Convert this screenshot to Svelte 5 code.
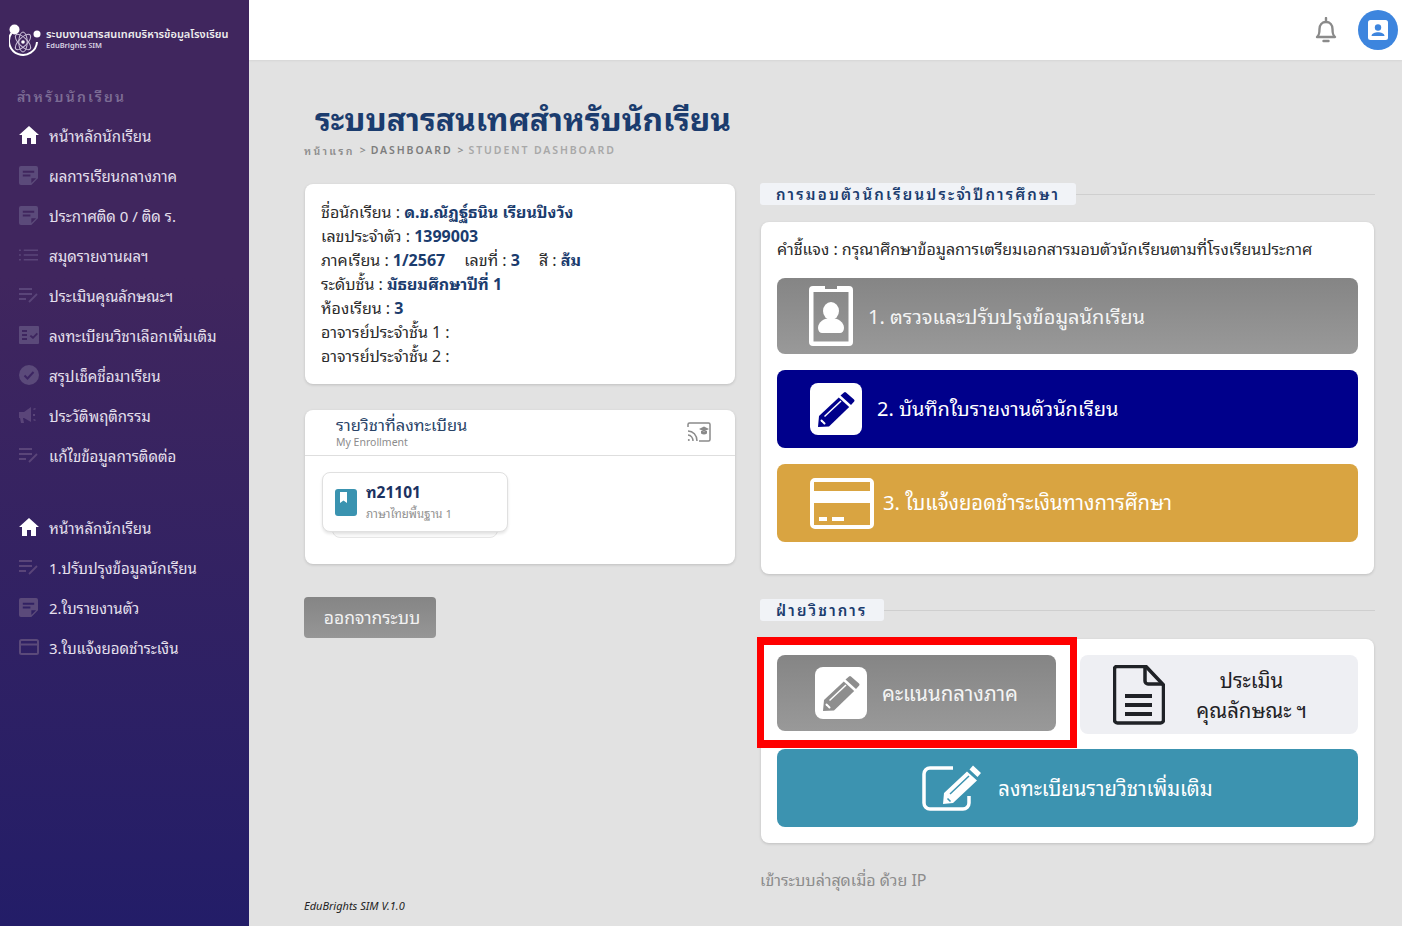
<script lang="ts">
  const studentMenu = [
    { label: 'หน้าหลักนักเรียน', icon: 'home' },
    { label: 'ผลการเรียนกลางภาค', icon: 'note' },
    { label: 'ประกาศติด 0 / ติด ร.', icon: 'note' },
    { label: 'สมุดรายงานผลฯ', icon: 'list' },
    { label: 'ประเมินคุณลักษณะฯ', icon: 'edit' },
    { label: 'ลงทะเบียนวิชาเลือกเพิ่มเติม', icon: 'check' },
    { label: 'สรุปเช็คชื่อมาเรียน', icon: 'circle' },
    { label: 'ประวัติพฤติกรรม', icon: 'horn' },
    { label: 'แก้ไขข้อมูลการติดต่อ', icon: 'edit' }
  ];
  const enrolMenu = [
    { label: 'หน้าหลักนักเรียน', icon: 'home' },
    { label: '1.ปรับปรุงข้อมูลนักเรียน', icon: 'edit' },
    { label: '2.ใบรายงานตัว', icon: 'note' },
    { label: '3.ใบแจ้งยอดชำระเงิน', icon: 'card' }
  ];
</script>

{#snippet pencil(color: string)}
  <svg viewBox="0 0 40 40" width="40" height="40" fill={color}>
    <path d="M28 3.500a1.500 1.500 0 0 1 2 0l8 7a1.500 1.500 0 0 1 .2 2L35 16 24.500 6.500z" />
    <path d="M22.800 8.500L33.200 18 13 37.500 2 38l1-11z" />
    <path d="M8.500 27.500L25 12" stroke="#fff" stroke-width="1.500" fill="none" />
    <path d="M5.500 31.500l3 3" stroke="#fff" stroke-width="2" stroke-linecap="round" fill="none" />
  </svg>
{/snippet}

{#snippet menuIcon(name: string)}
  {#if name === 'home'}
    <svg viewBox="0 0 20 18" width="20" height="18" fill="#fff"><path d="M10 0L0 9h3v9h5v-6h4v6h5V9h3z" /></svg>
  {:else if name === 'note'}
    <svg viewBox="0 0 20 20" width="19" height="19" fill="#5b4a7a"><path d="M2 0h16a2 2 0 0 1 2 2v11l-7 7H2a2 2 0 0 1-2-2V2a2 2 0 0 1 2-2zm2 5v2h12V5zm0 4v2h8V9zm9 4v5l5-5z" fill-rule="evenodd" /></svg>
  {:else if name === 'list'}
    <svg viewBox="0 0 20 14" width="19" height="14" stroke="#5a4579" stroke-width="1.600"><path d="M5 2h15M5 7h15M5 12h15M0 2h2M0 7h2M0 12h2" /></svg>
  {:else if name === 'edit'}
    <svg viewBox="0 0 20 16" width="20" height="16" stroke="#5a4579" stroke-width="1.800" fill="none"><path d="M0 2h13M0 7h13M0 12h7M10 15l8-8" /></svg>
  {:else if name === 'check'}
    <svg viewBox="0 0 20 18" width="20" height="18" fill="#5b4a7a"><path d="M1 0h18a1 1 0 0 1 1 1v16a1 1 0 0 1-1 1H1a1 1 0 0 1-1-1V1a1 1 0 0 1 1-1zm2 4v2h5V4zm0 4v2h5V8zm0 4v2h5v-2zm9-3l-1.300 1.300L14 13l5-5-1.300-1.300L14 10.400z" fill-rule="evenodd" /></svg>
  {:else if name === 'circle'}
    <svg viewBox="0 0 20 20" width="20" height="20"><circle cx="10" cy="10" r="10" fill="#5b4a7a" /><path d="M5.500 10.500l3 3 6-6.500" stroke="#3c2562" stroke-width="2" fill="none" /></svg>
  {:else if name === 'horn'}
    <svg viewBox="0 0 20 16" width="20" height="16" fill="#5a4579"><path d="M0 5h5l7-5v15L5 11H4l1 5H2l-1-5H0zM14 7h2v2h-2zM14 2l2-1 1 1-2 1zM14 13l1-1 2 1-1 1z" /></svg>
  {:else}
    <svg viewBox="0 0 20 16" width="20" height="16" fill="none" stroke="#5b4a7a" stroke-width="2"><rect x="1" y="1" width="18" height="14" rx="1.500" /><path d="M1 5.500h18" /></svg>
  {/if}
{/snippet}

<div class="layout">
  <aside class="sidebar">
    <div class="brand">
      <svg class="logo" viewBox="0 0 32 32" width="32" height="32">
        <path d="M2.500 9A14 14 0 1 0 28 18" fill="none" stroke="#fff" stroke-width="2" />
        <ellipse cx="14" cy="18" rx="10" ry="4.200" fill="none" stroke="#cdc2da" stroke-width="1" transform="rotate(45 14 18)" />
        <ellipse cx="14" cy="18" rx="10" ry="4.200" fill="none" stroke="#cdc2da" stroke-width="1" transform="rotate(-45 14 18)" />
        <ellipse cx="14" cy="18" rx="10" ry="4.200" fill="none" stroke="#cdc2da" stroke-width="1" transform="rotate(90 14 18)" />
        <circle cx="5.500" cy="5.500" r="5" fill="#fff" />
        <circle cx="28" cy="10" r="3.500" fill="#fff" />
        <circle cx="14" cy="18" r="1.800" fill="#fff" />
      </svg>
      <div>
        <div class="brand-th">ระบบงานสารสนเทศบริหารข้อมูลโรงเรียน</div>
        <div class="brand-en">EduBrights SIM</div>
      </div>
    </div>
    <div class="menu-title">สำหรับนักเรียน</div>
    <nav class="menu">
      {#each studentMenu as item}
        <div class="menu-item">
          <span class="menu-icon">{@render menuIcon(item.icon)}</span>
          <span>{item.label}</span>
        </div>
      {/each}
    </nav>
    <nav class="menu second">
      {#each enrolMenu as item}
        <div class="menu-item">
          <span class="menu-icon">{@render menuIcon(item.icon)}</span>
          <span>{item.label}</span>
        </div>
      {/each}
    </nav>
  </aside>

  <div class="page">
    <header class="topbar">
      <svg viewBox="0 0 24 26" width="24" height="26" fill="none" stroke="#8a8a8a" stroke-width="2.400">
        <path d="M3 20c2-2 2.500-3 2.500-8 0-4 2.500-7 6.500-7s6.500 3 6.500 7c0 5 .5 6 2.500 8z" stroke-linejoin="round" />
        <path d="M12 1v3M9.500 24h5" stroke-linecap="round" />
      </svg>
      <div class="avatar">
        <svg viewBox="0 0 20 20" width="20" height="20"><rect width="20" height="20" rx="2.500" fill="#fff" /><circle cx="10" cy="7.500" r="3.200" fill="#3d85de" /><path d="M3.500 16c0-2.600 3.500-3.800 6.500-3.800s6.500 1.200 6.500 3.800z" fill="#3d85de" /></svg>
      </div>
    </header>

    <main class="content">
      <div class="col-left">
        <h1>ระบบสารสนเทศสำหรับนักเรียน</h1>
        <div class="crumbs">
          <span class="first">หน้าแรก</span><i>&gt;</i><span class="mid">DASHBOARD</span><i>&gt;</i><span class="last">STUDENT DASHBOARD</span>
        </div>

        <section class="card info">
          <div>ชื่อนักเรียน : <b>ด.ช.ณัฏฐ์ธนิน เรียนปิงวัง</b></div>
          <div>เลขประจำตัว : <b>1399003</b></div>
          <div class="term">
            <span>ภาคเรียน : <b>1/2567</b></span>
            <span>เลขที่ : <b>3</b></span>
            <span>สี : <b>ส้ม</b></span>
          </div>
          <div>ระดับชั้น : <b>มัธยมศึกษาปีที่ 1</b></div>
          <div>ห้องเรียน : <b>3</b></div>
          <div>อาจารย์ประจำชั้น 1 :</div>
          <div>อาจารย์ประจำชั้น 2 :</div>
        </section>

        <section class="card enroll">
          <div class="enroll-head">
            <div>
              <div class="enroll-title">รายวิชาที่ลงทะเบียน</div>
              <div class="enroll-sub">My Enrollment</div>
            </div>
            <svg viewBox="0 0 24 20" width="24" height="20" fill="none" stroke="#8a8a8a" stroke-width="1.500">
              <path d="M1 5V2.500A1.500 1.500 0 0 1 2.500 1h19A1.500 1.500 0 0 1 23 2.500v15a1.500 1.500 0 0 1-1.500 1.500H12" />
              <path d="M1 9c5 0 9 4 9 10M1 13c3 0 5 3 5 6" />
              <circle cx="1.800" cy="18" r="1" fill="#8a8a8a" stroke="none" />
              <path d="M12 7l5-2.500L22 7l-5 2.500z M14 9v2.500c2 1.300 4 1.300 6 0V9" fill="#8a8a8a" stroke="none" />
            </svg>
          </div>
          <div class="enroll-body">
            <div class="course">
              <svg viewBox="0 0 22 27" width="22" height="27"><rect width="22" height="27" rx="3" fill="#3a93b0" /><path d="M5 3h7v11l-3.500-2.500L5 14z" fill="#fff" /></svg>
              <div>
                <div class="course-code">ท21101</div>
                <div class="course-name">ภาษาไทยพื้นฐาน 1</div>
              </div>
            </div>
          </div>
        </section>

        <button class="logout">ออกจากระบบ</button>
        <div class="version">EduBrights SIM V.1.0</div>
      </div>

      <div class="col-right">
        <div class="legend"><span>การมอบตัวนักเรียนประจำปีการศึกษา</span></div>
        <section class="card panel">
          <p class="note">คำชี้แจง : กรุณาศึกษาข้อมูลการเตรียมเอกสารมอบตัวนักเรียนตามที่โรงเรียนประกาศ</p>
          <div class="tile gray t1">
            <svg viewBox="0 0 44 60" width="44" height="60" fill="#fff">
              <path d="M4 0h12v3h12V0h12a4 4 0 0 1 4 4v52a4 4 0 0 1-4 4H4a4 4 0 0 1-4-4V4a4 4 0 0 1 4-4zm.5 6v49.500h35V6z" fill-rule="evenodd" />
              <ellipse cx="22" cy="25" rx="8" ry="9" />
              <path d="M9 42c0-6 6-10 13-10s13 4 13 10c0 3-2 5-4 5H13c-2 0-4-2-4-5z" />
            </svg>
            <span>1. ตรวจและปรับปรุงข้อมูลนักเรียน</span>
          </div>
          <div class="tile navy t2">
            <div class="icon-box">{@render pencil('#00008b')}</div>
            <span>2. บันทึกใบรายงานตัวนักเรียน</span>
          </div>
          <div class="tile gold t3">
            <svg viewBox="0 0 64 51" width="64" height="51" fill="#fff">
              <path d="M5 0h54a5 5 0 0 1 5 5v41a5 5 0 0 1-5 5H5a5 5 0 0 1-5-5V5a5 5 0 0 1 5-5zM4 4v9h56V4zM4 25v22h56V25z" fill-rule="evenodd" />
              <path d="M9 39h8v4H9zM22 39h12v4H22z" />
            </svg>
            <span>3. ใบแจ้งยอดชำระเงินทางการศึกษา</span>
          </div>
        </section>

        <div class="legend second-legend"><span>ฝ่ายวิชาการ</span></div>
        <section class="card panel acad">
          <div class="acad-row">
            <div class="tile gray a1">
              <div class="icon-box">{@render pencil('#8e8e8e')}</div>
              <span>คะแนนกลางภาค</span>
              <div class="marker"></div>
            </div>
            <div class="tile light a2">
              <svg viewBox="0 0 52 60" width="52" height="60">
                <path d="M3 1.500h30L50.500 20v35a3 3 0 0 1-3 3H4.500a3 3 0 0 1-3-3V3z" fill="none" stroke="#1f2226" stroke-width="3.500" stroke-linejoin="round" />
                <path d="M32 2v14a3 3 0 0 0 3 3h15" fill="none" stroke="#1f2226" stroke-width="3.500" />
                <path d="M12 29h27v4H12zM12 38h27v4H12zM12 47h27v4H12z" fill="#1f2226" />
              </svg>
              <span>ประเมิน<br />คุณลักษณะ ฯ</span>
            </div>
          </div>
          <div class="tile teal a3">
            <svg viewBox="0 0 60 46" width="60" height="46" fill="none">
              <path d="M47 31v7a6 6 0 0 1-6 6H8a6 6 0 0 1-6-6V9a6 6 0 0 1 6-6h23" stroke="#fff" stroke-width="3.500" />
              <path d="M51 .5l8 7.500-3.500 4-8-7.500zM45 6.500l10 9L31 38l-10 1 1-11z" fill="#fff" />
              <path d="M28 29l19-18M25.500 33.500l3 3" stroke="#3c93b0" stroke-width="1.500" />
            </svg>
            <span>ลงทะเบียนรายวิชาเพิ่มเติม</span>
          </div>
        </section>
        <div class="last-login">เข้าระบบล่าสุดเมื่อ ด้วย IP</div>
      </div>
    </main>
  </div>
</div>

<style>
  :global(body) {
    margin: 0;
    background: #e2e2e2;
    font-family: "Noto Sans", "Noto Sans Thai Looped", sans-serif;
  }
  .layout {
    display: flex;
    height: 926px;
    overflow: hidden;
  }
  .sidebar {
    width: 249px;
    flex-shrink: 0;
    background: linear-gradient(180deg, #40265e 0%, #40265e 30%, #231d68 100%);
    color: #e8e3f0;
  }
  .brand {
    display: flex;
    align-items: center;
    gap: 5px;
    padding: 24px 0 0 9px;
    height: 32px;
  }
  .brand-th {
    margin-top: -2px;
    font-family: "Noto Sans", "Noto Sans Thai", sans-serif;
    font-size: 11px;
    line-height: 13px;
    font-weight: 600;
    color: #eee;
    white-space: nowrap;
  }
  .brand-en {
    font-size: 7.500px;
    line-height: 11px;
    font-weight: 600;
    color: #d8d2e2;
  }
  .menu-title {
    margin: 31px 0 0 17px;
    font-size: 14px;
    line-height: 20px;
    letter-spacing: 2.200px;
    font-weight: 600;
    color: #7c6c94;
  }
  .menu {
    margin-top: 8px;
  }
  .menu.second {
    margin-top: 32px;
  }
  .menu-item {
    display: flex;
    align-items: center;
    height: 40px;
    padding-left: 19px;
    font-size: 15px;
    color: #e6e0ee;
    white-space: nowrap;
  }
  .menu-icon {
    width: 30px;
    display: flex;
    align-items: center;
  }
  .page {
    flex: 1;
    min-width: 0;
  }
  .topbar {
    height: 60px;
    background: #fff;
    display: flex;
    justify-content: flex-end;
    align-items: center;
    gap: 20px;
    padding-right: 4px;
    box-shadow: 0 1px 2px rgba(0, 0, 0, .06);
  }
  .avatar {
    width: 40px;
    height: 40px;
    border-radius: 50%;
    background: #3d85de;
    display: flex;
    align-items: center;
    justify-content: center;
  }
  .content {
    display: flex;
    gap: 25px;
    padding: 0 27px 0 55px;
  }
  .col-left {
    width: 431px;
    flex-shrink: 0;
  }
  .col-right {
    flex: 1;
    min-width: 0;
    padding-top: 123px;
  }
  h1 {
    margin: 37px 0 1px 11px;
    height: 44px;
    font-size: 31.700px;
    line-height: 44px;
    font-weight: 700;
    color: #1b3c6e;
    white-space: nowrap;
  }
  .crumbs {
    display: flex;
    align-items: center;
    gap: 5px;
    height: 16px;
    font-size: 10.500px;
    font-weight: 600;
    letter-spacing: 1.900px;
    color: #8c8c8c;
  }
  .crumbs .first {
    letter-spacing: 2.300px;
  }
  .crumbs i {
    font-style: normal;
    letter-spacing: 0;
  }
  .crumbs .mid {
    color: #7d7d7d;
  }
  .crumbs .last {
    color: #a8a8a8;
  }
  .card {
    background: #fff;
    border-radius: 8px;
    box-shadow: 0 1px 3px rgba(0, 0, 0, .16);
  }
  .info {
    margin: 26px 0 0 1px;
    height: 200px;
    width: 430px;
    padding: 16px 16px 8px;
    box-sizing: border-box;
    font-size: 16px;
    line-height: 24px;
    color: #2b2b2b;
    white-space: nowrap;
  }
  .info b {
    color: #1b3c6e;
    font-weight: 700;
  }
  .info > div {
    height: 24px;
  }
  .term {
    display: flex;
    gap: 19px;
  }
  .enroll {
    margin: 26px 0 0 1px;
    height: 154px;
    width: 430px;
  }
  .enroll-head {
    height: 43px;
    padding: 0 24px 2px 31px;
    display: flex;
    justify-content: space-between;
    align-items: center;
    border-bottom: 1px solid #dedede;
  }
  .enroll-title {
    font-size: 16.500px;
    line-height: 21px;
    color: #2a4468;
  }
  .enroll-sub {
    font-size: 10.500px;
    line-height: 15px;
    color: #8c8c8c;
  }
  .enroll-body {
    position: relative;
    z-index: 0;
    padding: 16px 17px;
  }
  .course {
    position: relative;
    width: 186px;
    height: 60px;
    box-sizing: border-box;
    padding: 0 12px;
    display: flex;
    align-items: center;
    gap: 9px;
    border: 1px solid #e0e0e0;
    border-radius: 8px;
    background: #fff;
    box-shadow: 0 2px 3px rgba(0, 0, 0, .1);
  }
  .course::after {
    content: "";
    position: absolute;
    left: 9px;
    right: 9px;
    bottom: -7px;
    height: 12px;
    z-index: -1;
    border: 1px solid #e6e6e6;
    border-radius: 0 0 8px 8px;
    background: #fafafa;
  }
  .course-code {
    font-size: 15.500px;
    line-height: 22px;
    font-weight: 700;
    color: #1b3160;
    margin-top: 2px;
  }
  .course-name {
    font-size: 11.500px;
    line-height: 22px;
    color: #909090;
  }
  .logout {
    display: block;
    margin-top: 33px;
    width: 132px;
    height: 41px;
    padding: 0 0 4px 4px;
    border: 0;
    border-radius: 4px;
    background: linear-gradient(180deg, #858585, #969696);
    color: #f2f2f2;
    font: inherit;
    font-size: 17.500px;
  }
  .version {
    margin-top: 260px;
    font-size: 11px;
    line-height: 16px;
    font-style: italic;
    color: #222;
  }
  .legend {
    height: 22px;
    display: flex;
    align-items: center;
  }
  .legend::after {
    content: "";
    flex: 1;
    height: 1px;
    background: #cfcfcf;
  }
  .legend span {
    background: #f1f3f7;
    border-radius: 3px;
    padding: 0 16px;
    height: 22px;
    line-height: 22px;
    font-size: 15px;
    font-weight: 600;
    letter-spacing: 2.200px;
    color: #1b3c6e;
    white-space: nowrap;
  }
  .second-legend {
    margin-top: 25px;
  }
  .second-legend + .panel {
    margin-top: 18px;
  }
  .panel {
    margin: 17px 1px 0;
    padding: 16px;
  }
  .note {
    margin: -1px 0 17px;
    height: 24px;
    font-size: 16px;
    line-height: 24px;
    color: #2b2b2b;
    white-space: nowrap;
  }
  .tile {
    display: flex;
    align-items: center;
    border-radius: 8px;
    color: #fff;
    font-size: 20px;
    white-space: nowrap;
    box-sizing: border-box;
  }
  .tile > span {
    padding-bottom: 4px;
  }
  .gray {
    background: linear-gradient(180deg, #858585, #999);
    color: #f4f4f4;
  }
  .navy {
    background: #00008b;
  }
  .gold {
    background: #d9a441;
  }
  .teal {
    background: #3c93b0;
  }
  .light {
    background: #eeeff3;
    color: #1f2226;
  }
  .t1 {
    height: 76px;
    padding-left: 32px;
    gap: 15px;
    margin-bottom: 16px;
  }
  .t1 > span,
  .a1 > span,
  .a3 > span {
    padding-bottom: 2px;
  }
  .t2 {
    height: 78px;
    padding-left: 33px;
    gap: 15px;
    margin-bottom: 16px;
  }
  .t3 {
    height: 78px;
    padding-left: 33px;
    gap: 9px;
    margin-bottom: 16px;
    font-size: 20.200px;
  }
  .icon-box {
    width: 52px;
    height: 52px;
    border-radius: 8px;
    background: #fff;
    display: flex;
    align-items: center;
    justify-content: center;
  }
  .acad-row {
    display: flex;
    gap: 24px;
    margin-bottom: 15px;
    align-items: flex-start;
    height: 79px;
  }
  .a1 {
    position: relative;
    width: 279px;
    height: 76px;
    padding-left: 38px;
    gap: 15px;
    font-size: 20.400px;
  }
  .marker {
    position: absolute;
    left: -20px;
    top: -18px;
    width: 320px;
    height: 111px;
    box-sizing: border-box;
    border: solid #f00;
    border-width: 8px 7px;
  }
  .a2 {
    flex: 1;
    height: 79px;
    padding-left: 33px;
    gap: 25px;
    font-size: 20.400px;
    line-height: 30px;
  }
  .a2 > span {
    flex: 1;
    text-align: center;
    padding: 0 45px 0 0;
  }
  .a3 {
    height: 78px;
    justify-content: center;
    gap: 16px;
    font-size: 20.300px;
  }
  .last-login {
    margin-top: 25px;
    font-size: 16px;
    line-height: 24px;
    color: #8c8c8c;
  }
</style>
